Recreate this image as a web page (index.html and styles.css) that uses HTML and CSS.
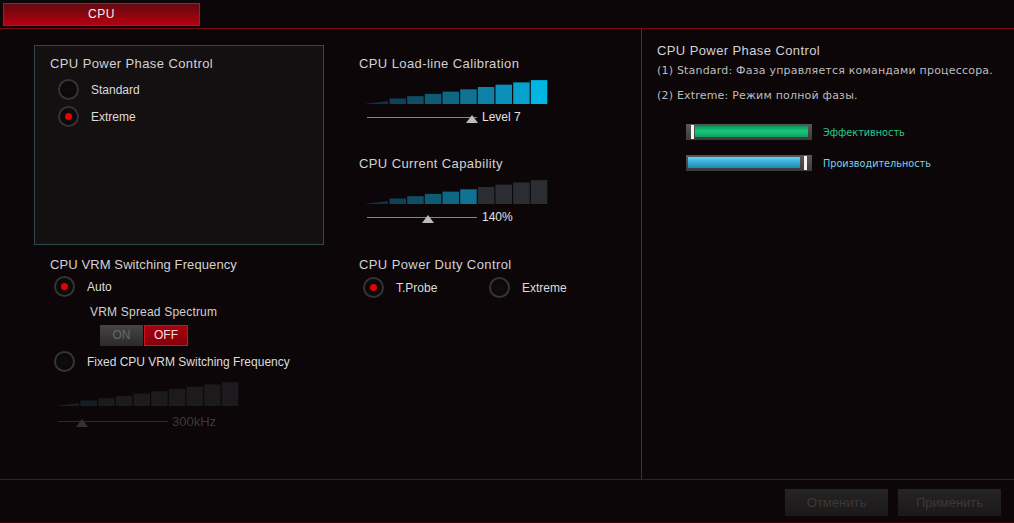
FILE: index.html
```html
<!DOCTYPE html>
<html lang="ru">
<head>
    <meta charset="UTF-8">
    <title>CPU</title>
    <link rel="stylesheet" href="styles.css">
</head>
<body>
    <div class="topbar">
        <div class="tab">CPU</div>
    </div>

    <div class="main">
        <div class="settings">
            <!-- left column -->
            <div class="col-left">
                <div class="phasebox">
                    <div class="title">CPU Power Phase Control</div>
                    <div class="radios">
                        <div class="radio"><span class="dot"></span><span>Standard</span></div>
                        <div class="radio on"><span class="dot"></span><span>Extreme</span></div>
                    </div>
                </div>

                <div class="title vrm-title">CPU VRM Switching Frequency</div>
                <div class="radio on r-auto"><span class="dot"></span><span>Auto</span></div>
                <div class="subtitle">VRM Spread Spectrum</div>
                <div class="toggle"><span class="t-on">ON</span><span class="t-off">OFF</span></div>
                <div class="radio r-fixed"><span class="dot"></span><span>Fixed CPU VRM Switching Frequency</span></div>

                <svg class="graph dim" width="184" height="25" viewBox="0 0 184 25">
                    <polygon class="s0" points="0,25 24,21.9 24,25"/>
                    <rect class="s1" x="25.5" y="19.5" width="16.5" height="5.5"/>
                    <rect class="s2" x="43.2" y="17.2" width="16.5" height="7.8"/>
                    <rect class="s3" x="60.8" y="14.9" width="16.5" height="10.1"/>
                    <rect class="s4" x="78.5" y="12.6" width="16.5" height="12.4"/>
                    <rect class="s5" x="96.2" y="10.3" width="16.5" height="14.7"/>
                    <rect class="s6" x="113.8" y="8" width="16.5" height="17"/>
                    <rect class="s7" x="131.5" y="5.7" width="16.5" height="19.3"/>
                    <rect class="s8" x="149.2" y="3.4" width="16.5" height="21.6"/>
                    <rect class="s9" x="166.8" y="1.1" width="16.5" height="23.9"/>
                </svg>
                <div class="slider dim">
                    <div class="track"><span class="thumb" style="left: 18px"></span></div>
                    <span class="value">300kHz</span>
                </div>
            </div>

            <!-- middle column -->
            <div class="col-mid">
                <div class="title">CPU Load-line Calibration</div>
                <svg class="graph" width="184" height="25" viewBox="0 0 184 25">
                    <polygon class="s0" points="0,25 24,21.9 24,25"/>
                    <rect class="s1" x="25.5" y="19.5" width="16.5" height="5.5"/>
                    <rect class="s2" x="43.2" y="17.2" width="16.5" height="7.8"/>
                    <rect class="s3" x="60.8" y="14.9" width="16.5" height="10.1"/>
                    <rect class="s4" x="78.5" y="12.6" width="16.5" height="12.4"/>
                    <rect class="s5" x="96.2" y="10.3" width="16.5" height="14.7"/>
                    <rect class="s6" x="113.8" y="8" width="16.5" height="17"/>
                    <rect class="s7" x="131.5" y="5.7" width="16.5" height="19.3"/>
                    <rect class="s8" x="149.2" y="3.4" width="16.5" height="21.6"/>
                    <rect class="s9" x="166.8" y="1.1" width="16.5" height="23.9"/>
                </svg>
                <div class="slider">
                    <div class="track"><span class="thumb" style="left: 99px"></span></div>
                    <span class="value">Level 7</span>
                </div>

                <div class="title sec">CPU Current Capability</div>
                <svg class="graph cc" width="184" height="25" viewBox="0 0 184 25">
                    <polygon class="s0" points="0,25 24,21.9 24,25"/>
                    <rect class="s1" x="25.5" y="19.5" width="16.5" height="5.5"/>
                    <rect class="s2" x="43.2" y="17.2" width="16.5" height="7.8"/>
                    <rect class="s3" x="60.8" y="14.9" width="16.5" height="10.1"/>
                    <rect class="s4" x="78.5" y="12.6" width="16.5" height="12.4"/>
                    <rect class="s5" x="96.2" y="10.3" width="16.5" height="14.7"/>
                    <rect class="s6" x="113.8" y="8" width="16.5" height="17"/>
                    <rect class="s7" x="131.5" y="5.7" width="16.5" height="19.3"/>
                    <rect class="s8" x="149.2" y="3.4" width="16.5" height="21.6"/>
                    <rect class="s9" x="166.8" y="1.1" width="16.5" height="23.9"/>
                </svg>
                <div class="slider">
                    <div class="track"><span class="thumb" style="left: 55px"></span></div>
                    <span class="value">140%</span>
                </div>

                <div class="title sec duty-title">CPU Power Duty Control</div>
                <div class="duty">
                    <div class="radio on"><span class="dot"></span><span>T.Probe</span></div>
                    <div class="radio"><span class="dot"></span><span>Extreme</span></div>
                </div>
            </div>
        </div>

        <!-- help pane -->
        <div class="help">
            <div class="title">CPU Power Phase Control</div>
            <p class="desc">(1) Standard: Фаза управляется командами процессора.</p>
            <p class="desc second">(2) Extreme: Режим полной фазы.</p>
            <div class="meter">
                <div class="meter-bar green"><span class="fill"></span><span class="mark"></span></div>
                <span class="meter-label green">Эффективность</span>
            </div>
            <div class="meter">
                <div class="meter-bar blue"><span class="fill"></span><span class="mark"></span></div>
                <span class="meter-label blue">Производительность</span>
            </div>
        </div>
    </div>

    <div class="footer">
        <button class="btn">Отменить</button>
        <button class="btn">Применить</button>
    </div>
</body>
</html>
```

FILE: styles.css
```css
body {
    margin: 0;
    width: 1014px;
    height: 523px;
    overflow: hidden;
    background: #0c0608;
    color: #d6d6d6;
    font-family: "Liberation Sans", Arial, sans-serif;
    font-size: 12px;
}

.topbar {
    height: 25px;
    padding: 3px 0 0 3px;
    border-bottom: 1px solid #760b14;
}
.tab {
    width: 195px;
    height: 21px;
    border: 1px solid #c40f1b;
    background: linear-gradient(#640a10, #b3000f);
    color: #f0f0f0;
    font-size: 12px;
    line-height: 21px;
    text-align: center;
    letter-spacing: 0.5px;
}

.main {
    display: flex;
    height: 450px;
}
.settings {
    width: 641px;
    border-right: 1px solid #3a3838;
    display: flex;
}

.title {
    font-size: 13px;
    line-height: 16px;
    letter-spacing: 0.4px;
    color: #d2d2d2;
}

/* radio buttons */
.radio {
    display: flex;
    align-items: center;
    gap: 12px;
    height: 21px;
    font-size: 12px;
    color: #dcdcdc;
}
.radio .dot {
    width: 21px;
    height: 21px;
    box-sizing: border-box;
    border-radius: 50%;
    border: 2px solid #353333;
    background: radial-gradient(#0e0c0d, #090708);
    display: flex;
    align-items: center;
    justify-content: center;
    flex-shrink: 0;
}
.radio.on .dot::after {
    content: "";
    width: 7px;
    height: 7px;
    border-radius: 50%;
    background: #e80000;
}

/* left column */
.col-left {
    padding: 16px 0 0 34px;
    width: 290px;
}
.phasebox {
    width: 290px;
    height: 200px;
    box-sizing: border-box;
    border: 1px solid #2e4a4d;
    background: #140f10;
    padding: 10px 0 0 15px;
}
.phasebox .radios {
    margin: 7px 0 0 8px;
    display: flex;
    flex-direction: column;
    gap: 6px;
}
.vrm-title {
    margin: 12px 0 0 16px;
    letter-spacing: 0.1px;
}
.r-auto {
    margin: 3px 0 0 20px;
}
.subtitle {
    margin: 8px 0 0 56px;
    line-height: 14px;
    color: #d0d0d0;
    letter-spacing: 0.2px;
}
.toggle {
    display: flex;
    margin: 6px 0 0 66px;
    height: 21px;
    line-height: 21px;
    text-align: center;
}
.t-on {
    width: 43px;
    background: linear-gradient(#464444, #2c2a2a);
    color: #6a6868;
}
.t-off {
    width: 42px;
    margin-left: 1px;
    border: 1px solid #d0101c;
    line-height: 19px;
    background: linear-gradient(#a8000e, #86000a);
    color: #f4dede;
}
.r-fixed {
    margin: 5px 0 0 20px;
}
.col-left .graph {
    display: block;
    margin: 9px 0 0 21px;
}
.col-left .slider {
    margin: 8px 0 0 24px;
}

/* bar graphs */
.graph {
    display: block;
    margin: 7px 0 0 5px;
}
.graph .s0 { fill: #0a3444; }
.graph .s1 { fill: #0c4357; }
.graph .s2 { fill: #0d4f65; }
.graph .s3 { fill: #0e5b74; }
.graph .s4 { fill: #0f6783; }
.graph .s5 { fill: #0f7494; }
.graph .s6 { fill: #0e82a6; }
.graph .s7 { fill: #0b91b9; }
.graph .s8 { fill: #07a1cd; }
.graph .s9 { fill: #01b5e2; }

.graph.cc .s6,
.graph.cc .s7,
.graph.cc .s8,
.graph.cc .s9 { fill: #2a2e33; }

.graph.dim .s0,
.graph.dim .s1 { fill: #141f24; }
.graph.dim rect:nth-of-type(n+2) { fill: #1c1a1c; }

/* sliders */
.slider {
    display: flex;
    align-items: center;
    height: 14px;
    margin: 6px 0 0 8px;
}
.track {
    position: relative;
    width: 110px;
    height: 1px;
    background: #858585;
}
.thumb {
    position: absolute;
    top: -2px;
    width: 0;
    height: 0;
    border-left: 6px solid transparent;
    border-right: 6px solid transparent;
    border-bottom: 8px solid #bcbcbc;
}
.value {
    margin-left: 5px;
    color: #e2e2e2;
    font-size: 12px;
}
.slider.dim .track { background: #2c2a2b; }
.slider.dim .thumb { border-bottom-color: #333132; }
.slider.dim .value { margin-left: 4px; color: #3c3a3b; font-size: 13px; }

/* middle column */
.col-mid {
    padding-top: 27px;
    margin-left: 35px;
    width: 270px;
}
.sec {
    margin-top: 32px;
}
.duty-title {
    margin-top: 33px;
}
.duty {
    display: flex;
    margin: 4px 0 0 4px;
}
.duty .radio:first-child {
    width: 126px;
}

/* help pane */
.help {
    flex: 1;
    padding: 14px 0 0 15px;
}
.desc {
    margin: 5px 0 0;
    font-family: "DejaVu Sans", sans-serif;
    font-size: 11px;
    line-height: 14px;
    letter-spacing: 0.2px;
    color: #bdbdbd;
}
.desc.second {
    margin-top: 11px;
}
.meter {
    display: flex;
    align-items: center;
    gap: 11px;
    margin: 21px 0 0 29px;
}
.meter + .meter {
    margin-top: 15px;
}
.meter-bar {
    position: relative;
    width: 126px;
    height: 16px;
    box-sizing: border-box;
    background: linear-gradient(#575757, #3b3b3b);
}
.meter-bar .fill {
    position: absolute;
    top: 2px;
    bottom: 3px;
}
.meter-bar.green .fill {
    left: 9px;
    right: 4px;
    background: linear-gradient(#0b9456, #18c97c 45%, #0e9e5d);
}
.meter-bar.blue .fill {
    left: 2px;
    right: 12px;
    background: linear-gradient(#63d2f2, #36abd6 50%, #2585ae);
}
.meter-bar .mark {
    position: absolute;
    top: 1px;
    bottom: 1px;
    width: 3px;
    background: #f4f4f4;
}
.meter-bar.green .mark { left: 5px; }
.meter-bar.blue .mark { left: 118px; }
.meter-label {
    font-family: "DejaVu Sans", sans-serif;
    font-size: 9.7px;
}
.meter-label.green { color: #1fd08a; }
.meter-label.blue { color: #79d2f0; }

/* footer */
.footer {
    height: 42px;
    box-sizing: content-box;
    border-top: 1px solid #6a0a13;
    border-bottom: 1px solid #3c0710;
    display: flex;
    justify-content: flex-end;
    align-items: flex-start;
    gap: 10px;
    padding: 0 13px 0 0;
}
.btn {
    margin-top: 9px;
    width: 103px;
    height: 27px;
    border: none;
    background: linear-gradient(#262324, #1b1819);
    color: #3c3839;
    font-family: "Liberation Sans", Arial, sans-serif;
    font-size: 13px;
}
```
